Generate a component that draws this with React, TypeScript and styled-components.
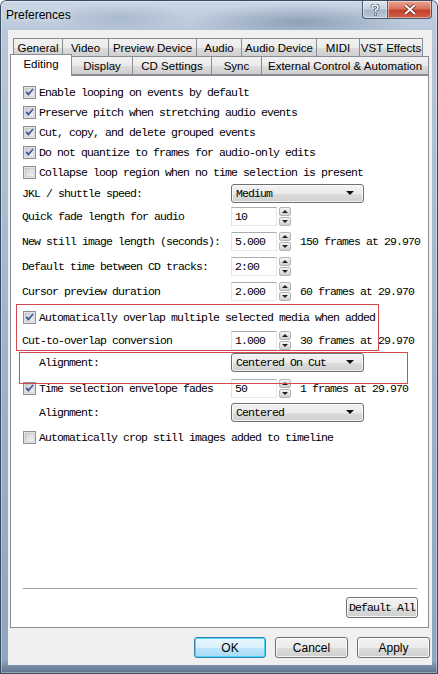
import React from "react";
import styled, { createGlobalStyle } from "styled-components";

const GlobalStyle = createGlobalStyle`
  html, body {
    margin: 0;
    padding: 0;
    background: #ffffff;
  }
  body {
    font-family: "Liberation Sans", Arial, sans-serif;
  }
`;

const MONO = `"Liberation Mono", "DejaVu Sans Mono", monospace`;

// window chrome
const Window = styled.div`
  width: 438px;
  height: 674px;
  box-sizing: border-box;
  display: flex;
  flex-direction: column;
  padding-bottom: 9px;
  border-radius: 6px 6px 0 0;
  overflow: hidden;
  background:
    radial-gradient(ellipse 110px 18px at 300px 22px, rgba(88, 108, 138, 0.45), transparent),
    radial-gradient(ellipse 70px 14px at 120px 18px, rgba(120, 140, 165, 0.3), transparent),
    linear-gradient(180deg, #cad7e5 0px, #b8c8da 30px, #a2b6cc 300px, #8ea6bf 660px, #5a6e86 674px);
  box-shadow: inset 0 0 0 1px #3c4c60, inset 0 0 0 2px rgba(255, 255, 255, 0.35);
`;

const TitleBar = styled.div`
  height: 30px;
  flex: none;
  display: flex;
  align-items: flex-start;
  padding: 0 6px 0 6px;
`;

const Title = styled.div`
  font-size: 12px;
  line-height: 30px;
  color: #000;
  text-shadow: 0 0 8px rgba(255, 255, 255, 0.9);
`;

const CaptionButtons = styled.div`
  margin-left: auto;
  display: flex;
  margin-top: 1px;
`;

const CaptionButton = styled.div<{ $w: number; $close?: boolean }>`
  width: ${(p) => p.$w}px;
  height: 18px;
  box-sizing: border-box;
  display: flex;
  align-items: center;
  justify-content: center;
  border: 1px solid #4a5a6e;
  border-top: none;
  border-left: ${(p) => (p.$close ? "none" : "1px solid #4a5a6e")};
  border-radius: ${(p) => (p.$close ? "0 0 4px 0" : "0 0 0 4px")};
  background: ${(p) =>
    p.$close
      ? "linear-gradient(180deg, #e8a493 0%, #d9735f 45%, #c4412b 55%, #d0604a 100%)"
      : "linear-gradient(180deg, #dfe7f0 0%, #c3d0de 45%, #a5b6ca 55%, #b9c8d8 100%)"};
  box-shadow: inset 0 0 0 1px rgba(255, 255, 255, 0.45);
`;

const Client = styled.div`
  flex: 1;
  margin: 0 6px 0 8px;
  background: #f0f0f0;
  display: flex;
  flex-direction: column;
  padding-top: 9px;
`;

// tabs
const TabRow = styled.div<{ $indent: number }>`
  display: flex;
  align-items: flex-end;
  height: 18px;
  margin-left: ${(p) => p.$indent}px;
  position: relative;
`;

const Tab = styled.div<{ $w: number; $active?: boolean }>`
  width: ${(p) => p.$w}px;
  height: ${(p) => (p.$active ? 22 : 19)}px;
  box-sizing: border-box;
  flex: none;
  display: flex;
  justify-content: center;
  align-items: ${(p) => (p.$active ? "flex-start" : "center")};
  padding-top: ${(p) => (p.$active ? 3 : 0)}px;
  font-size: 11.5px;
  color: #000;
  border: 1px solid #898c95;
  border-bottom: ${(p) => (p.$active ? "none" : "1px solid #898c95")};
  margin-left: -1px;
  background: ${(p) =>
    p.$active ? "#ffffff" : "linear-gradient(180deg, #f2f2f2 0%, #ebebeb 50%, #dddddd 51%, #cfcfcf 100%)"};
  position: relative;
  top: ${(p) => (p.$active ? 1 : 0)}px;
  z-index: ${(p) => (p.$active ? 2 : 0)};
  &:first-child {
    margin-left: 0;
  }
`;

const Panel = styled.div`
  position: relative;
  height: 553px;
  box-sizing: border-box;
  margin: 0 3px 0 2px;
  background: #ffffff;
  border: 1px solid #898c95;
  padding: 6px 0 0 11px;
  display: flex;
  flex-direction: column;
  font-family: ${MONO};
  font-size: 11.5px;
  letter-spacing: -0.9px;
  color: #000;
`;

const Row = styled.div<{ $h: number }>`
  height: ${(p) => p.$h}px;
  display: flex;
  align-items: center;
  white-space: nowrap;
`;

const CheckLabel = styled.label`
  display: flex;
  align-items: center;
  gap: 3px;
  padding-left: 1px;
`;

const Label = styled.div<{ $w?: number }>`
  width: ${(p) => (p.$w ? `${p.$w}px` : "auto")};
  flex: none;
  display: flex;
  align-items: center;
`;

const SpinWrap = styled.div`
  display: flex;
  align-items: stretch;
  height: 19px;
  gap: 2px;
`;

const SpinField = styled.div`
  width: 46px;
  box-sizing: border-box;
  border: 1px solid #abadb3;
  border-color: #abadb3 #e3e9ef #e3e9ef #e2e3ea;
  padding-left: 3px;
  display: flex;
  align-items: center;
  background: #fff;
`;

const SpinButtons = styled.div`
  width: 12px;
  display: flex;
  flex-direction: column;
  gap: 1px;
`;

const SpinButton = styled.div<{ $down?: boolean }>`
  flex: 1;
  display: flex;
  align-items: center;
  justify-content: center;
  border: 1px solid #b5b5b5;
  border-radius: 2px;
  background: linear-gradient(180deg, #f4f4f4 0%, #e2e2e2 50%, #cfcfcf 100%);
  &::after {
    content: "";
    border-left: 3px solid transparent;
    border-right: 3px solid transparent;
    ${(p) => (p.$down ? "border-top: 3px solid #222;" : "border-bottom: 3px solid #222;")}
  }
`;

const Info = styled.span`
  margin-left: 9px;
`;

const Combo = styled.div`
  width: 133px;
  height: 19px;
  box-sizing: border-box;
  display: flex;
  align-items: center;
  padding: 0 0 0 4px;
  border: 1px solid #707070;
  border-radius: 3px;
  background: linear-gradient(180deg, #f2f2f2 0%, #ebebeb 50%, #dddddd 51%, #cfcfcf 100%);
  box-shadow: inset 0 0 0 1px rgba(255, 255, 255, 0.7);
  &::after {
    content: "";
    margin-left: auto;
    margin-right: 9px;
    border-left: 4px solid transparent;
    border-right: 4px solid transparent;
    border-top: 4px solid #111;
  }
`;

// annotation frames drawn over the form
const Marker = styled.div<{ $x: number; $y: number; $w: number; $h: number }>`
  position: absolute;
  left: ${(p) => p.$x}px;
  top: ${(p) => p.$y}px;
  width: ${(p) => p.$w}px;
  height: ${(p) => p.$h}px;
  box-sizing: border-box;
  border: 1px solid #d24a4e;
  pointer-events: none;
  z-index: 3;
`;

const PanelFooter = styled.div`
  margin-top: auto;
  display: flex;
  flex-direction: column;
  align-items: flex-end;
  padding: 0 10px 9px 0;
`;

const Separator = styled.div`
  align-self: stretch;
  height: 1px;
  margin: 0 1px 8px 1px;
  background: #a0a0a0;
`;

const DialogButton = styled.button<{ $w: number; $mono?: boolean; $default?: boolean }>`
  width: ${(p) => p.$w}px;
  height: 21px;
  box-sizing: border-box;
  padding: 0;
  font-family: ${(p) => (p.$mono ? MONO : `"Liberation Sans", Arial, sans-serif`)};
  font-size: ${(p) => (p.$mono ? 11.5 : 12)}px;
  letter-spacing: ${(p) => (p.$mono ? "-0.9px" : "0")};
  color: #000;
  border: 1px solid ${(p) => (p.$default ? "#3c7fb1" : "#707070")};
  border-radius: 3px;
  background: ${(p) =>
    p.$default
      ? "linear-gradient(180deg, #eaf6fd 0%, #d9f0fc 50%, #bee6fd 51%, #a7d9f5 100%)"
      : "linear-gradient(180deg, #f2f2f2 0%, #ebebeb 50%, #dddddd 51%, #cfcfcf 100%)"};
  box-shadow: inset 0 0 0 1px ${(p) => (p.$default ? "#48d6fb" : "rgba(255,255,255,0.8)")};
`;

const ButtonBar = styled.div`
  display: flex;
  justify-content: flex-end;
  gap: 9px;
  margin-top: 9px;
  padding-right: 2px;
`;

const Check: React.FC<{ on?: boolean }> = ({ on }) => (
  <svg width="13" height="13" viewBox="0 0 13 13" style={{ flex: "none" }}>
    <defs>
      <linearGradient id="cbfill" x1="0" y1="0" x2="1" y2="1">
        <stop offset="0" stopColor="#cbcfd5" />
        <stop offset="1" stopColor="#f6f6f6" />
      </linearGradient>
    </defs>
    <rect x="0.5" y="0.5" width="12" height="12" fill="#f4f4f4" stroke="#8e8f8f" />
    <rect x="2" y="2" width="9" height="9" fill="url(#cbfill)" stroke="#aeb3b9" strokeWidth="0.6" />
    {on && <path d="M2.6 6.4 L4 5.2 L5.4 7 L9.6 2.4 L10.6 3.6 L5.4 10 Z" fill="#3d5a98" />}
  </svg>
);

const Spin: React.FC<{ value: string }> = ({ value }) => (
  <SpinWrap>
    <SpinField>{value}</SpinField>
    <SpinButtons>
      <SpinButton />
      <SpinButton $down />
    </SpinButtons>
  </SpinWrap>
);

const LABEL_W = 209;

const App: React.FC = () => {
  return (
    <>
      <GlobalStyle />
      <Window>
        <TitleBar>
          <Title>Preferences</Title>
          <CaptionButtons>
            <CaptionButton $w={26}>
              <svg width="10" height="12" viewBox="0 0 10 12">
                <path
                  d="M2 3.5 C2 1.5 3.5 1 5 1 C6.8 1 8 2 8 3.5 C8 5 6.5 5.4 5.6 6.2 L5.6 7.6"
                  fill="none"
                  stroke="#3a4a5e"
                  strokeWidth="3"
                />
                <rect x="4" y="9" width="3" height="2.6" fill="#3a4a5e" />
                <path
                  d="M2 3.5 C2 1.5 3.5 1 5 1 C6.8 1 8 2 8 3.5 C8 5 6.5 5.4 5.6 6.2 L5.6 7.6"
                  fill="none"
                  stroke="#fff"
                  strokeWidth="1.6"
                />
                <rect x="4.6" y="9.5" width="1.8" height="1.6" fill="#fff" />
              </svg>
            </CaptionButton>
            <CaptionButton $w={44} $close>
              <svg width="14" height="11" viewBox="0 0 14 11">
                <path d="M2 1 L12 10 M12 1 L2 10" stroke="#6a2418" strokeWidth="3.6" />
                <path d="M2 1 L12 10 M12 1 L2 10" stroke="#fff" strokeWidth="2" />
              </svg>
            </CaptionButton>
          </CaptionButtons>
        </TitleBar>

        <Client>
          <TabRow $indent={5}>
            <Tab $w={50}>General</Tab>
            <Tab $w={47}>Video</Tab>
            <Tab $w={89}>Preview Device</Tab>
            <Tab $w={46}>Audio</Tab>
            <Tab $w={76}>Audio Device</Tab>
            <Tab $w={44}>MIDI</Tab>
            <Tab $w={64}>VST Effects</Tab>
          </TabRow>
          <TabRow $indent={2}>
            <Tab $w={62} $active>
              Editing
            </Tab>
            <Tab $w={62}>Display</Tab>
            <Tab $w={80}>CD Settings</Tab>
            <Tab $w={51}>Sync</Tab>
            <Tab $w={168}>External Control &amp; Automation</Tab>
          </TabRow>

          <Panel>
            <Row $h={20}>
              <CheckLabel>
                <Check on />
                Enable looping on events by default
              </CheckLabel>
            </Row>
            <Row $h={20}>
              <CheckLabel>
                <Check on />
                Preserve pitch when stretching audio events
              </CheckLabel>
            </Row>
            <Row $h={20}>
              <CheckLabel>
                <Check on />
                Cut, copy, and delete grouped events
              </CheckLabel>
            </Row>
            <Row $h={20}>
              <CheckLabel>
                <Check on />
                Do not quantize to frames for audio-only edits
              </CheckLabel>
            </Row>
            <Row $h={20}>
              <CheckLabel>
                <Check />
                Collapse loop region when no time selection is present
              </CheckLabel>
            </Row>

            <Row $h={22}>
              <Label $w={LABEL_W}>JKL / shuttle speed:</Label>
              <Combo>Medium</Combo>
            </Row>
            <Row $h={25}>
              <Label $w={LABEL_W}>Quick fade length for audio</Label>
              <Spin value="10" />
            </Row>
            <Row $h={25}>
              <Label $w={LABEL_W}>New still image length (seconds):</Label>
              <Spin value="5.000" />
              <Info>150 frames at 29.970</Info>
            </Row>
            <Row $h={25}>
              <Label $w={LABEL_W}>Default time between CD tracks:</Label>
              <Spin value="2:00" />
            </Row>
            <Row $h={25}>
              <Label $w={LABEL_W}>Cursor preview duration</Label>
              <Spin value="2.000" />
              <Info>60 frames at 29.970</Info>
            </Row>

            <Row $h={26}>
              <CheckLabel>
                <Check on />
                Automatically overlap multiple selected media when added
              </CheckLabel>
            </Row>
            <Row $h={20}>
              <Label $w={LABEL_W}>Cut-to-overlap conversion</Label>
              <Spin value="1.000" />
              <Info>30 frames at 29.970</Info>
            </Row>
            <Row $h={24}>
              <Label $w={LABEL_W}>
                <Label $w={17} />
                Alignment:
              </Label>
              <Combo>Centered On Cut</Combo>
            </Row>
            <Row $h={28}>
              <Label $w={LABEL_W}>
                <CheckLabel>
                  <Check on />
                  Time selection envelope fades
                </CheckLabel>
              </Label>
              <Spin value="50" />
              <Info>1 frames at 29.970</Info>
            </Row>
            <Row $h={20}>
              <Label $w={LABEL_W}>
                <Label $w={17} />
                Alignment:
              </Label>
              <Combo>Centered</Combo>
            </Row>
            <Row $h={30}>
              <CheckLabel>
                <Check />
                Automatically crop still images added to timeline
              </CheckLabel>
            </Row>

            <PanelFooter>
              <Separator />
              <DialogButton $w={72} $mono>
                Default All
              </DialogButton>
            </PanelFooter>

            <Marker $x={5} $y={228} $w={363} $h={47} />
            <Marker $x={8} $y={276} $w={389} $h={32} />
          </Panel>

          <ButtonBar>
            <DialogButton $w={72} $default>
              OK
            </DialogButton>
            <DialogButton $w={73}>Cancel</DialogButton>
            <DialogButton $w={73}>Apply</DialogButton>
          </ButtonBar>
        </Client>
      </Window>
    </>
  );
};

export default App;
